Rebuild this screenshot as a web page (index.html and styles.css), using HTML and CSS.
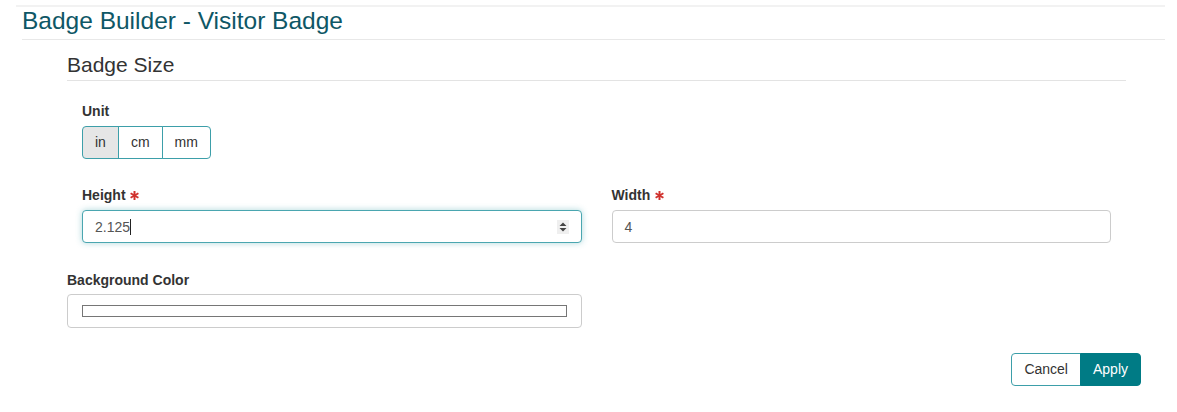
FILE: index.html
```html
<!DOCTYPE html>
<html lang="en">
<head>
<meta charset="utf-8">
<title>Badge Builder - Visitor Badge</title>
<link rel="stylesheet" href="styles.css">
</head>
<body>
<div class="page">
  <div class="topbar"></div>
  <h1 class="page-title">Badge Builder - Visitor Badge</h1>

  <section class="section">
    <h2 class="section-title">Badge Size</h2>

    <div class="row">
      <div class="form-group unit-group">
        <label class="label">Unit</label>
        <div class="btn-group">
          <button class="seg active">in</button>
          <button class="seg">cm</button>
          <button class="seg">mm</button>
        </div>
      </div>
    </div>

    <div class="row cols">
      <div class="form-group">
        <label class="label">Height <svg class="req" viewBox="0 0 10 10" width="9" height="9"><g fill="#d0312d"><rect x="3.9" y="0" width="2.2" height="10"/><rect x="3.9" y="0" width="2.2" height="10" transform="rotate(60 5 5)"/><rect x="3.9" y="0" width="2.2" height="10" transform="rotate(-60 5 5)"/></g></svg></label>
        <div class="form-control focused">
          <span class="value">2.125</span><span class="caret"></span>
          <span class="spinner"><svg viewBox="0 0 12 14" width="12" height="14"><path d="M6 2.5 L9.5 6 L2.5 6 Z M6 11.5 L9.5 8 L2.5 8 Z" fill="#444"/></svg></span>
        </div>
      </div>
      <div class="form-group">
        <label class="label">Width <svg class="req" viewBox="0 0 10 10" width="9" height="9"><g fill="#d0312d"><rect x="3.9" y="0" width="2.2" height="10"/><rect x="3.9" y="0" width="2.2" height="10" transform="rotate(60 5 5)"/><rect x="3.9" y="0" width="2.2" height="10" transform="rotate(-60 5 5)"/></g></svg></label>
        <div class="form-control">
          <span class="value">4</span>
        </div>
      </div>
    </div>

    <div class="form-group bg-group">
      <label class="label">Background Color</label>
      <div class="form-control color-control">
        <span class="swatch"></span>
      </div>
    </div>

    <div class="actions">
      <div class="btn-group">
        <button class="btn">Cancel</button>
        <button class="btn primary">Apply</button>
      </div>
    </div>
  </section>
</div>
</body>
</html>
```

FILE: styles.css
```css
* { box-sizing: border-box; }

body {
  margin: 0;
  font-family: "Liberation Sans", Arial, sans-serif;
  color: #333;
  background: #fff;
}

.page {
  margin: 0 12px 0 16px;
  padding-top: 5px;
}

.topbar {
  height: 2px;
  background: #f2f2f2;
}

.page-title {
  margin: 1px 0 0 6px;
  padding-bottom: 5px;
  font-size: 24.5px;
  line-height: 26px;
  font-weight: normal;
  color: #0e5766;
  border-bottom: 1px solid #e8e8e8;
}

.section {
  margin: 13px 39px 0 51px;
}

.section-title {
  margin: 0;
  padding-bottom: 3px;
  font-size: 21px;
  line-height: 24px;
  font-weight: normal;
  color: #333;
  border-bottom: 1px solid #e3e3e3;
}

.row {
  padding: 0 15px;
}

.row:first-of-type {
  padding-top: 21px;
}

.cols {
  display: grid;
  grid-template-columns: 1fr 1fr;
  column-gap: 30px;
}

.form-group {
  margin-bottom: 28px;
}

.unit-group {
  margin-bottom: 27px;
}

.label {
  display: block;
  font-size: 14px;
  line-height: 18px;
  font-weight: bold;
  margin-bottom: 6px;
  color: #333;
}

.req {
  vertical-align: 0;
  margin-left: 1px;
}

.btn-group {
  display: inline-flex;
}

.seg, .btn {
  font-family: inherit;
  font-size: 14px;
  color: #333;
  background: #fff;
  border: 1px solid #3d9fa9;
  height: 33px;
  padding: 0 12px;
  margin: 0;
  line-height: 31px;
}

.seg + .seg, .btn + .btn {
  margin-left: -1px;
}

.seg:first-child, .btn:first-child {
  border-radius: 4px 0 0 4px;
}

.seg:last-child, .btn:last-child {
  border-radius: 0 4px 4px 0;
}

.seg.active {
  background: #e6e6e6;
}

.form-control {
  position: relative;
  display: flex;
  align-items: center;
  height: 33px;
  border: 1px solid #ccc;
  border-radius: 4px;
  padding: 0 12px;
  font-size: 14px;
  color: #555;
  background: #fff;
}

.form-control.focused {
  border-color: #4aa6b0;
  box-shadow: 0 0 6px rgba(74, 166, 176, 0.45);
}

.caret {
  display: inline-block;
  width: 1px;
  height: 16px;
  background: #222;
}

.spinner {
  margin-left: auto;
  display: flex;
  width: 12px;
  height: 14px;
  background: #efefef;
}

.bg-group {
  width: 515px;
  margin-bottom: 25px;
}

.bg-group .label {
  margin-bottom: 5px;
}

.color-control {
  height: 34px;
  padding: 0 14px;
}

.swatch {
  display: block;
  width: 100%;
  height: 12px;
  border: 1px solid #767676;
  background: #fff;
}

.actions {
  display: flex;
  justify-content: flex-end;
  margin-right: -15px;
}

.btn {
  padding: 0 12px;
}

.btn.primary {
  background: #007b85;
  border-color: #007b85;
  color: #fff;
  padding: 0 12px;
}
```
